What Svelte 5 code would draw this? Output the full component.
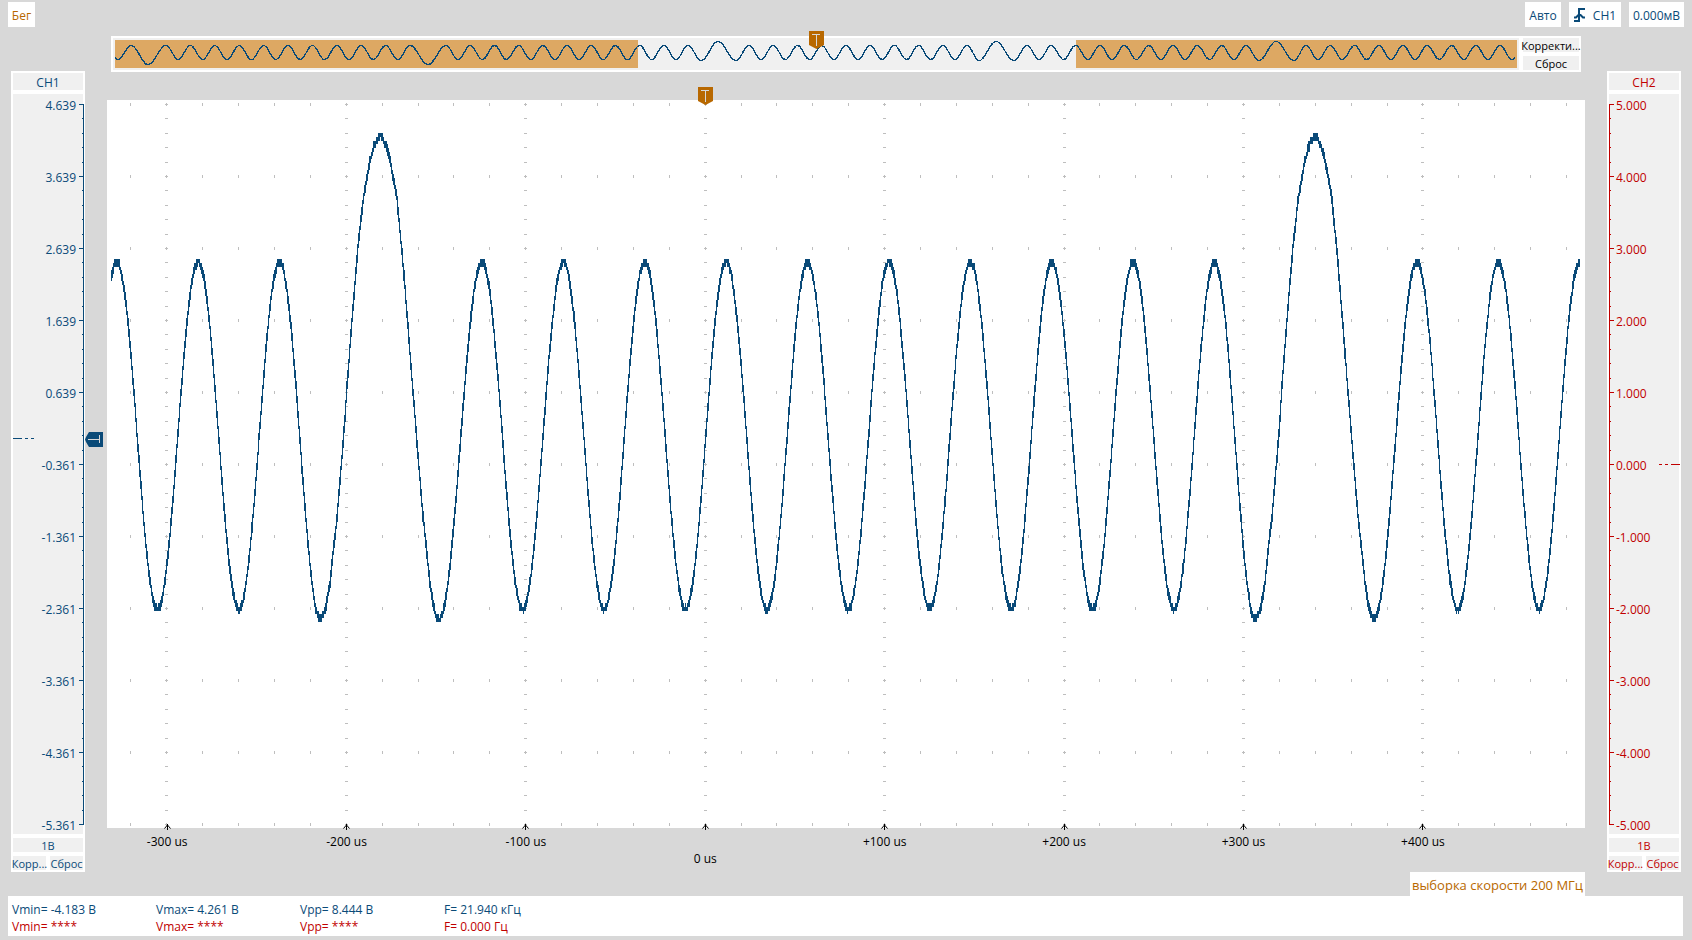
<script>
  const PLOT_W = 1478;
  const PLOT_H = 728;
  const PERIOD = 935;

  const timeTicks = ['-300 us', '-200 us', '-100 us', '0 us', '+100 us', '+200 us', '+300 us', '+400 us'];

  const channels = [
    { id: 'ch1', name: 'CH1', top: 4.639, zero: 46.5 },
    { id: 'ch2', name: 'CH2', top: 5, zero: 50 }
  ];

  const measures = [
    { id: 'ch1', cells: ['Vmin= -4.183 В', 'Vmax= 4.261 В', 'Vpp= 8.444 В', 'F= 21.940 кГц'] },
    { id: 'ch2', cells: ['Vmin= ****', 'Vmax= ****', 'Vpp= ****', 'F= 0.000 Гц'] }
  ];

  function scaleLabels(top) {
    return Array.from({ length: 11 }, (_, i) => (top - i).toFixed(3));
  }

  // cosine between two extremes
  function ease(a, b, x) {
    const t = (x - a[0]) / (b[0] - a[0]);
    return a[1] + (b[1] - a[1]) * (1 - Math.cos(Math.PI * t)) / 2;
  }

  function sample(points, x, straight) {
    let i = 0;
    while (i < points.length - 2 && points[i + 1][0] <= x) i++;
    const a = points[i];
    const b = points[i + 1];
    if (straight) return a[1] + (b[1] - a[1]) * (x - a[0]) / (b[0] - a[0]);
    return ease(a, b, x);
  }

  // tall pulse, linear between the samples
  const pulse = [
    [213.5, 519], [218, 512], [223, 483], [226, 453], [230, 417], [235, 357], [238, 318],
    [240, 286], [246, 207], [251, 146], [256, 101], [263, 60], [268, 43], [274, 35],
    [279, 46], [283, 60], [290, 99], [293, 131], [296, 163], [301, 227], [306, 292],
    [308, 316], [311, 356], [316, 416], [320, 453], [323, 483], [326, 503], [329, 516], [332, 519]
  ];

  const TOP = 162;
  const BOTTOM = 509;
  const ripple = [[172.5, TOP], [213.5, 519]];
  const tail = [[332, 519], [375, TOP]];
  for (let i = 0; i < 9; i++) {
    tail.push([375 + i * 81.4 + 40.7, BOTTOM], [375 + (i + 1) * 81.4, TOP]);
  }

  function signal(px) {
    let x = px;
    while (x < 172.5) x += PERIOD;
    while (x >= 172.5 + PERIOD) x -= PERIOD;
    if (x < 213.5) return sample(ripple, x);
    if (x < 332) return sample(pulse, x, true);
    return sample(tail, x);
  }

  // one vertical bar per pixel column, snapped to the ADC step
  function trace(from, to, fn, step, spread) {
    let d = '';
    for (let x = from; x < to; x++) {
      const noise = Math.sin(x * 12.9898) * 43758.5453;
      const n = (noise - Math.floor(noise) - 0.5) * spread * 0.8;
      const a = fn(x) + n;
      const b = fn(x + 1) + n;
      const lo = Math.round(Math.round((Math.min(a, b) - spread) / step) * step);
      const hi = Math.round(Math.round((Math.max(a, b) + spread) / step) * step);
      d += `M${x} ${lo}h1V${Math.max(hi, lo + 1)}h-1z`;
    }
    return d;
  }

  const wave = trace(4, 1473, signal, 3.7, 3);

  // record overview: [first peak, number of periods, last peak, next extreme]
  const overview = [[3, 19.5], [16, 5.5], [33, 24.5]];
  const bursts = [
    [51, 10, 295, [313, 24.5]],
    [331, 10, 573, [603, 1.5]],
    [634, 9, 852, [881, 1.5]],
    [912, 9, 1131, [1161, 1.5]],
    [1191, 8, 1385, null]
  ];
  for (const [first, n, last, next] of bursts) {
    const w = (last - first) / n;
    for (let i = 0; i < n; i++) {
      overview.push([first + i * w, 5.5], [first + (i + 0.5) * w, 19.5]);
    }
    overview.push([last, 5.5]);
    if (next && next[1] < 5) {
      overview.push([next[0] - 17, 20.5], next, [next[0] + 18, 20.5]);
    } else if (next) {
      overview.push(next);
    } else {
      overview.push([last + 12, 19.5], [last + 24, 5.5]);
    }
  }
  const miniWave = trace(0, 1400, (x) => sample(overview, x), 1, 0.5);

  function gridPath() {
    let d = '';
    for (let k = -1; k <= 39; k++) {
      const x = Math.round(59.3 + k * 35.89);
      if (x > PLOT_W) break;
      for (let r = 0; r <= 10; r++) d += `M${x} ${3 + r * 72}h1v3h-1z`;
    }
    for (let k = 0; k < 8; k++) {
      const x = Math.round(59.3 + k * 179.45);
      for (let r = 0; r <= 50; r++) d += `M${x - 1} ${4 + Math.round(r * 14.4)}h3v1h-3z`;
    }
    return d;
  }

  function axisPath(side) {
    let d = side === 'ch1' ? 'M4 10h1v721h-1z' : 'M0 10h1v721h-1z';
    for (let r = 0; r <= 50; r++) {
      const len = r % 5 ? 2 : 5;
      d += `M${side === 'ch1' ? 5 - len : 0} ${10 + Math.round(r * 14.4)}h${len}v1h-${len}z`;
    }
    return d;
  }
</script>

{#snippet flag()}
  <svg class="flag" viewBox="0 0 15 18" width="15" height="18" aria-hidden="true">
    <path fill="#b86800" d="M0 0H15V14L7.500 18L0 14Z" />
    <path fill="#d8d8d8" shape-rendering="crispEdges" d="M3 3H11V4H8V15H7V4H3Z" />
  </svg>
{/snippet}

<div class="scope">
  <header class="topbar">
    <button class="chip run">Бег</button>
    <div class="trigger">
      <button class="chip auto">Авто</button>
      <button class="chip source">
        <svg viewBox="0 0 12 15" width="12" height="15" aria-hidden="true">
          <path fill="none" stroke="currentColor" stroke-width="2" d="M0 13H5V1H11M0 9.500H2L5.500 6L9 9.500H11" />
        </svg>
        CH1
      </button>
      <button class="chip level">0.000мВ</button>
    </div>
  </header>

  <main>
    {#each channels as ch}
      <section class="channel {ch.id}">
        <button class="name">{ch.name}</button>
        <div class="ruler">
          <ol>
            {#each scaleLabels(ch.top) as label}
              <li>{label}</li>
            {/each}
          </ol>
          <svg class="axis" viewBox="0 0 5 740" preserveAspectRatio="none" shape-rendering="crispEdges" aria-hidden="true">
            <path fill="currentColor" d={axisPath(ch.id)} />
          </svg>
          <svg class="zero" style="top: {ch.zero}%" viewBox="0 0 21 1" width="21" height="1" shape-rendering="crispEdges" aria-hidden="true">
            <path fill="currentColor" d="M0 0h9v1h-9zM12 0h3v1h-3zM18 0h3v1h-3z" />
          </svg>
          {#if ch.id === 'ch1'}
            <svg class="level-flag" viewBox="0 0 18 15" width="18" height="15" aria-hidden="true">
              <path fill="currentColor" d="M18 0V15H4L1 10L0 7.500L1 5L4 0Z" />
              <path fill="#d8d8d8" shape-rendering="crispEdges" d="M3 7H14V3H15V11H14V8H3Z" />
            </svg>
          {/if}
        </div>
        <button class="small">1В</button>
        <div class="pair">
          <button class="small">Корр...</button>
          <button class="small">Сброс</button>
        </div>
      </section>
    {/each}

    <section class="screen">
      <div class="record">
        <div class="record-view">
          <svg viewBox="0 0 1402 28" preserveAspectRatio="none" shape-rendering="crispEdges" aria-hidden="true">
            <path fill="#dda863" d="M0 0H523V28H0ZM961 0H1402V28H961Z" />
            <path fill="#0a4a78" d={miniWave} />
          </svg>
          <div class="record-flag">{@render flag()}</div>
        </div>
        <div class="record-buttons">
          <button class="small">Корректи...</button>
          <button class="small">Сброс</button>
        </div>
      </div>

      <div class="plot">
        <svg viewBox="0 0 {PLOT_W} {PLOT_H}" preserveAspectRatio="none" shape-rendering="crispEdges" role="img" aria-label="CH1">
          <path fill="#bebebe" d={gridPath()} />
          <path fill="#0a4a78" d={wave} />
        </svg>
        <div class="plot-flag">{@render flag()}</div>
      </div>

      <ol class="time">
        {#each timeTicks as t}
          <li class:origin={t === '0 us'}>
            <svg viewBox="0 0 7 6" width="7" height="6" aria-hidden="true">
              <path fill="none" stroke="#000" d="M3.500 0V6M.500 4.500L3.500 1L6.500 4.500" />
            </svg>
            <span>{t}</span>
          </li>
        {/each}
      </ol>
    </section>
  </main>

  <div class="rate"><span>выборка скорости 200 МГц</span></div>

  <footer>
    <table>
      <tbody>
        {#each measures as row}
          <tr class={row.id}>
            {#each row.cells as cell}
              <td>{cell}</td>
            {/each}
          </tr>
        {/each}
      </tbody>
    </table>
  </footer>
</div>

<style>
  :global(body) {
    background: #d8d8d8;
  }

  .scope {
    display: flex;
    flex-direction: column;
    box-sizing: border-box;
    min-height: 100vh;
    min-width: 900px;
    padding-bottom: 4px;
    background: #d8d8d8;
    color: #000;
    font: 12px/18px "Open Sans", "Noto Sans", sans-serif;
  }

  button {
    display: flex;
    align-items: center;
    justify-content: center;
    padding: 0;
    border: 0;
    background: #f0f0f0;
    color: inherit;
    font: inherit;
    white-space: nowrap;
    cursor: pointer;
  }

  ol {
    margin: 0;
    padding: 0;
    list-style: none;
  }

  svg {
    display: block;
  }

  .ch1 {
    color: #0a4a78;
  }

  .ch2 {
    color: #c00000;
  }

  .topbar {
    display: flex;
    justify-content: space-between;
    padding: 2px 8px 9px;
    color: #0a4a78;
  }

  .trigger {
    display: flex;
    gap: 8px;
  }

  .chip {
    height: 25px;
    padding-top: 2px;
    background: #fff;
  }

  .run {
    width: 27px;
    color: #b86800;
  }

  .auto {
    width: 36px;
  }

  .source {
    width: 52px;
    gap: 7px;
  }

  .level {
    width: 55px;
  }

  main {
    display: grid;
    flex: 1;
    grid-template-columns: 74px minmax(0, 1fr) 74px;
    column-gap: 22px;
    padding: 0 11px;
  }

  .channel {
    display: flex;
    flex-direction: column;
    grid-row: 1;
    gap: 4px;
    margin-top: 35px;
    padding: 2px;
    background: #fff;
  }

  .channel.ch2 {
    grid-column: 3;
  }

  .name {
    height: 17px;
    padding-top: 2px;
  }

  .ruler {
    position: relative;
    display: flex;
    flex: 1;
    background: #f0f0f0;
  }

  .ruler ol {
    display: flex;
    flex: 1;
    flex-direction: column;
    justify-content: space-between;
  }

  .ruler li {
    height: 20px;
    line-height: 24px;
  }

  .ch1 .ruler ol {
    padding-right: 3px;
    text-align: right;
  }

  .ch2 .ruler {
    flex-direction: row-reverse;
  }

  .ch2 .ruler ol {
    padding-left: 2px;
  }

  .axis {
    width: 5px;
    height: 100%;
  }

  .ch1 .axis {
    margin-right: -1px;
  }

  .zero {
    position: absolute;
    left: 0;
  }

  .ch2 .zero {
    right: -1px;
    left: auto;
    transform: scaleX(-1);
  }

  .level-flag {
    position: absolute;
    top: 45.7%;
    left: 72px;
  }

  .small {
    box-sizing: border-box;
    height: 14px;
    padding-top: 2px;
    font-size: 11px;
    line-height: 14px;
  }

  .pair {
    display: grid;
    grid-template-columns: 1fr 1fr;
    gap: 4px;
  }

  .pair .small {
    width: 33px;
  }

  .screen {
    display: flex;
    flex-direction: column;
    grid-row: 1;
    grid-column: 2;
  }

  .record {
    display: flex;
    gap: 4px;
    margin: 0 4px 28px;
    padding: 2px;
    background: #fff;
  }

  .record-view {
    position: relative;
    flex: 1;
    padding: 2px;
    background: #f0f0f0;
  }

  .record-view > svg {
    width: 100%;
    height: 28px;
  }

  .record-flag {
    position: absolute;
    top: -7px;
    left: 50%;
    margin-left: -7px;
  }

  .record-buttons {
    display: flex;
    flex-direction: column;
    gap: 4px;
    width: 56px;
  }

  .plot {
    position: relative;
    display: flex;
    flex: 1;
    min-height: 400px;
    background: #fff;
  }

  .plot > svg {
    position: absolute;
    width: 100%;
    height: 100%;
  }

  .plot-flag {
    position: absolute;
    top: -13px;
    left: 40.5%;
    margin-left: -8px;
  }

  .time {
    display: grid;
    grid-template-columns: repeat(8, 11.9%);
    height: 48px;
    margin-top: -4px;
    margin-left: -2%;
    z-index: 1;
  }

  .time li {
    display: flex;
    flex-direction: column;
    align-items: center;
    gap: 3px;
  }

  .time .origin {
    gap: 20px;
  }

  .rate {
    display: flex;
    justify-content: flex-end;
    padding: 0 107px;
    color: #b86800;
    font-size: 13px;
  }

  .rate span {
    padding: 4px 2px 2px;
    background: #fff;
  }

  footer {
    margin: 0 9px 0 8px;
    padding: 5px 4px 1px;
    background: #fff;
    line-height: 17px;
  }

  table {
    width: 576px;
    border-collapse: collapse;
    table-layout: fixed;
  }

  td {
    padding: 0;
    white-space: nowrap;
  }
</style>
